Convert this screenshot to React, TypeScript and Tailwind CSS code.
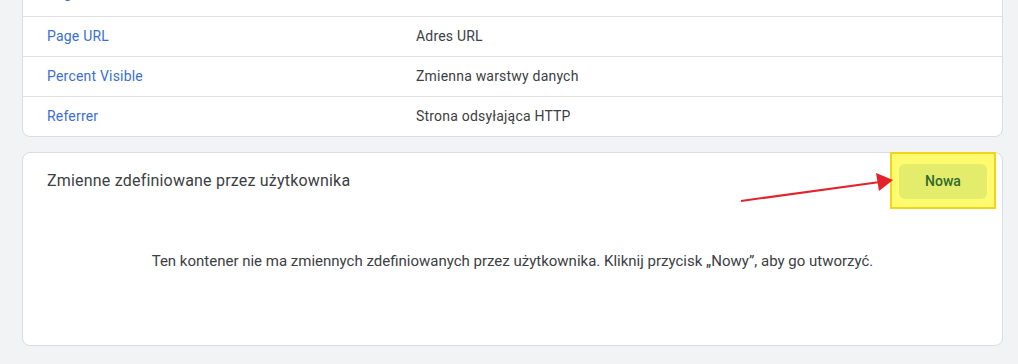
import React from "react";

const rows = [
  { name: "Page Path", type: "Adres URL" },
  { name: "Page URL", type: "Adres URL" },
  { name: "Percent Visible", type: "Zmienna warstwy danych" },
  { name: "Referrer", type: "Strona odsyłająca HTTP" },
];

export default function App() {
  return (
    <div
      className="relative h-[364px] overflow-hidden bg-[#f1f3f4] pl-[22px] pr-[15px]"
      style={{ fontFamily: "Roboto, 'Noto Sans', sans-serif" }}
    >
      <div className="-mt-[25px] overflow-hidden rounded-lg border border-[#dadce0] bg-white">
        {rows.map((r, i) => (
          <div
            key={r.name}
            className={`flex h-[40px] items-center text-[14px] tracking-[0.2px] ${i > 0 ? "border-t border-[#e0e0e0]" : "pb-[6px]"}`}
          >
            <div className="w-[393px] pl-[24px] text-[#3b6fd1]">{r.name}</div>
            <div className="text-[#3c4043]">{r.type}</div>
          </div>
        ))}
      </div>

      <div className="mt-[15px] h-[194px] rounded-lg border border-[#dadce0] bg-white">
        <div className="flex h-[56px] items-center justify-between pl-[24px] pr-[15px]">
          <div className="text-[16px] tracking-[0.2px] text-[#3c4043]">Zmienne zdefiniowane przez użytkownika</div>
          <div className="relative">
            <div className="absolute -left-[9px] -top-[12px] h-[57px] w-[106px] border-2 border-[#f1d51c] bg-[#fefc6e]" />
            <button className="relative flex h-[35px] w-[88px] items-center justify-center rounded-md bg-[#e4ec6b] text-[14px] font-medium text-[#2e6a2e]">
              Nowa
            </button>
          </div>
        </div>
        <div className="pt-[41px] text-center text-[15px] text-[#3c4043]">
          Ten kontener nie ma zmiennych zdefiniowanych przez użytkownika. Kliknij przycisk „Nowy”, aby go utworzyć.
        </div>
      </div>

      <svg className="pointer-events-none absolute left-0 top-0" width="1018" height="364">
        <line x1="741" y1="201" x2="880" y2="182" stroke="#e3222b" strokeWidth="2" />
        <polygon points="893,180 876,173 879,191" fill="#e3222b" />
      </svg>
    </div>
  );
}
